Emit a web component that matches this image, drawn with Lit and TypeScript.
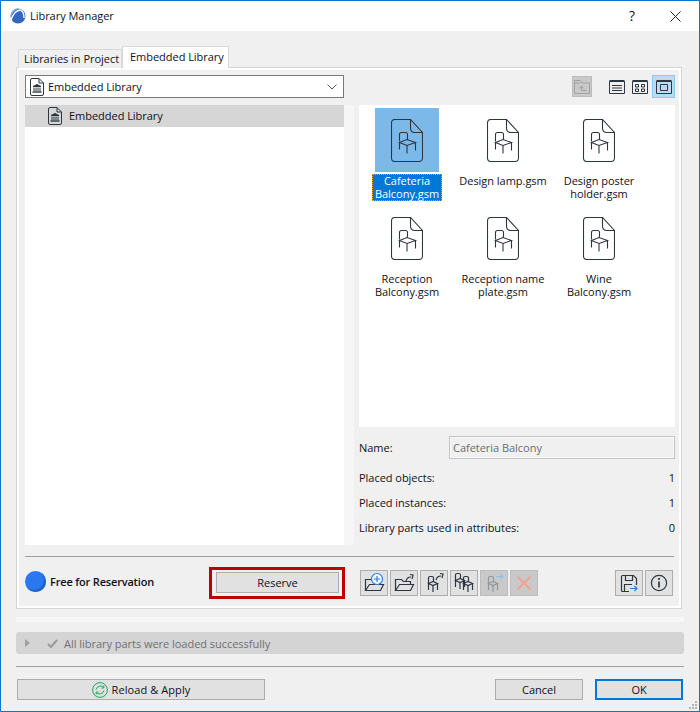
import { LitElement, html, css, svg } from "lit";
import { customElement } from "lit/decorators.js";

const ink = "#2d3640";

const chair = (x: number, y: number, c = ink) => svg`
  <g transform="translate(${x} ${y})" fill="none" stroke=${c} stroke-width="1.1">
    <path d="M.5 9.5V2.5Q.5.5 2.5.5H6.5Q8.5.5 8.5 2.5V7.5" />
    <path d="M.5 10.5L8 7.5L16.5 10.5L8 13.5Z" />
    <path d="M.5 10.5V17.5M16.5 10.5V18.5M8 13.5V21.5" />
  </g>`;

const smallChair = (dx: number, dy: number, c = ink) => svg`
  <g transform="translate(${dx} ${dy})" fill="none" stroke=${c} stroke-width="1.2">
    <path d="M8.5 13V8Q8.5 6.5 10 6.5H12Q13.5 6.5 13.5 8V11" />
    <path d="M8.5 13.5L13 11.5L17.5 13.5L13 15.5Z" />
    <path d="M8.5 13.5V20M17.5 13.5V20M13 15.5V22" />
  </g>`;

const fileChair = html`<svg width="32" height="43" viewBox="0 0 32 43" fill="none" stroke=${ink} stroke-width="1.1">
  <path d="M4 .5H19.5L31.5 13.5V39Q31.5 42.5 28 42.5H4Q.5 42.5 .5 39V4Q.5 .5 4 .5Z" />
  <path d="M19.5 .5V9Q19.5 13.5 24 13.5H31.5" />
  ${chair(8, 13)}
</svg>`;

const libDoc = html`<svg width="14" height="18" viewBox="0 0 14 18" fill="none" stroke=${ink} stroke-width="1">
  <path d="M2 .5H9L13.5 5V16Q13.5 17.5 12 17.5H2Q.5 17.5 .5 16V2Q.5 .5 2 .5Z" />
  <path d="M9 .5V5H13.5" />
  <path d="M7 6.5L11 8.5H3Z" fill=${ink} />
  <path d="M4 9.5V13M6 9.5V13M8 9.5V13M10 9.5V13" />
  <path d="M2.5 14H11.5" stroke-width="1.4" />
</svg>`;

const folder = svg`<g fill="none" stroke-width="1.2"><path d="M5.5 20.5V9.5H11.5L13.5 11.5H20.5V14" /><path d="M5.5 20.5L9.5 14.5H23.5L20.5 20.5Z" /></g>`;
const upArrow = (dx: number, dy: number) => svg`<g transform="translate(${dx} ${dy})" fill="none" stroke-width="1.2"><path d="M16 10Q17 6 21 6" /><path d="M20 3.5L23 4L22 8" /></g>`;

const glyphs: Record<string, unknown> = {
  add: html`<svg width="28" height="26" viewBox="0 0 28 26" stroke=${ink}>${folder}
    <circle cx="17" cy="9" r="5.5" fill="#f4f8ff" stroke="#2a7de1" stroke-width="1.2" /><path d="M14 9H20M17 6V12" stroke="#2a7de1" fill="none" stroke-width="1.2" /></svg>`,
  up: html`<svg width="28" height="26" viewBox="0 0 28 26" stroke=${ink}>${folder}${upArrow(0, 1)}</svg>`,
  chairUp: html`<svg width="28" height="26" viewBox="0 0 28 26" stroke=${ink}>${smallChair(0, 0)}${upArrow(0, 0)}</svg>`,
  chairs: html`<svg width="28" height="26" viewBox="0 0 28 26" stroke=${ink}>${smallChair(-3, -3)}${smallChair(5, 0)}</svg>`,
  chairOut: html`<svg width="28" height="26" viewBox="0 0 28 26">${smallChair(0, 0, "#92979b")}<path d="M16 6.5H23M20.5 4L23 6.5L20.5 9" fill="none" stroke="#8fbdf0" stroke-width="1.2" /></svg>`,
  remove: html`<svg width="28" height="26" viewBox="0 0 28 26" fill="none" stroke="#eda595" stroke-width="2.2"><path d="M7.5 6.5L20.5 19.5M20.5 6.5L7.5 19.5" /></svg>`,
  save: html`<svg width="28" height="26" viewBox="0 0 28 26" fill="none" stroke=${ink} stroke-width="1.2">
    <path d="M14 21.5H7.5Q6.5 21.5 6.5 20.5V6.5Q6.5 5.5 7.5 5.5H18.5L21.5 8.5V15" />
    <path d="M10.5 5.5V10.5H17.5V5.5M9.5 21.5V14.5H17" />
    <path d="M15 18.5H22M19.5 16L22 18.5L19.5 21" stroke="#2a7de1" /></svg>`,
  info: html`<svg width="28" height="26" viewBox="0 0 28 26" fill="none" stroke=${ink} stroke-width="1.2">
    <circle cx="14" cy="13" r="7.6" /><path d="M14 11.5V17.5" stroke-width="1.7" /><path d="M14 8V9.8" stroke-width="1.9" /></svg>`,
};

const tools = [
  { g: "add", off: false }, { g: "up", off: false }, { g: "chairUp", off: false },
  { g: "chairs", off: false }, { g: "chairOut", off: true }, { g: "remove", off: true },
];

const items = [
  { name: "Cafeteria\nBalcony.gsm", sel: true },
  { name: "Design lamp.gsm" },
  { name: "Design poster\nholder.gsm" },
  { name: "Reception\nBalcony.gsm" },
  { name: "Reception name\nplate.gsm" },
  { name: "Wine\nBalcony.gsm" },
];

@customElement("app-root")
export class AppRoot extends LitElement {
  static styles = css`
    :host { display: block; width: 700px; height: 712px; font: 11px/15px "Open Sans", "Liberation Sans", sans-serif; letter-spacing: -0.03px; color: #10101c; }
    * { box-sizing: border-box; }
    .window { position: relative; width: 700px; height: 712px; border: 1px solid #0a78d0; background: #f0f0f0; display: flex; flex-direction: column; }
    .title { height: 30px; background: #fff; display: flex; align-items: center; padding: 0 18px 0 9px; flex: none; }
    .title .name { margin-left: 4px; flex: 1; margin-top: -2px; }
    .help { margin-right: 35px; font-size: 14px; margin-top: -2px; }
    .content { padding: 15px 15px 0; display: flex; flex-direction: column; flex: 1; }
    .tabs { display: flex; align-items: flex-end; padding-left: 2px; height: 22px; margin-bottom: -1px; position: relative; z-index: 1; }
    .tab { height: 19px; padding: 1px 0 0 5px; width: 104px; background: #f0f0f0; border: 1px solid #d9d9d9; border-bottom: none; white-space: nowrap; }
    .tab.on { height: 22px; width: 107px; background: #fff; padding: 2px 0 0 7px; border-color: #d9d9d9; }
    .panel { width: 666px; height: 542px; flex: none; border: 1px solid #d4d4d4; box-shadow: inset 0 0 0 2px #fff; padding: 7px 7px 0 8px; }
    .cols { display: grid; grid-template-columns: 319px 316px; column-gap: 15px; }
    .select { height: 23px; background: #fff; border: 1px solid #7a7a7a; display: flex; align-items: center; padding: 0 6px 0 4px; gap: 4px; }
    .select span { flex: 1; }
    .views { display: flex; align-items: center; }
    .vbtn { width: 23px; height: 23px; display: flex; align-items: center; justify-content: center; }
    .vbtn.plain svg { margin-right: 1px; }
    .vbtn.sel { background: #b8dcf8; border: 1px solid #90c8f0; }
    .vbtn.folder { width: 20px; height: 21px; background: #c9c9c9; border: 1px solid #bcbcbc; margin: 0 auto 0 213px; }
    .main { margin-top: 7px; height: 440px; position: relative; }
    .tree { background: #fff; }
    .row { height: 22px; background: #d6d6d6; display: flex; align-items: center; padding-left: 23px; gap: 7px; }
    .row span { margin-top: -2px; }
    .split { position: absolute; left: 319px; top: 0; width: 10px; height: 440px; background: #f6f6f6; }
    .right { display: flex; flex-direction: column; }
    .grid { height: 322px; background: #fff; padding-top: 3px; display: grid; grid-template-columns: repeat(3, 96px); grid-auto-rows: 98px; }
    .cell { display: flex; flex-direction: column; align-items: center; }
    .thumb { width: 64px; height: 64px; flex: none; display: flex; align-items: center; justify-content: center; }
    .cell.sel .thumb { background: #7cb9e8; }
    .label { margin-top: 2px; height: 27px; text-align: center; line-height: 13px; white-space: pre; padding: 0 2px; border: 1px solid transparent; }
    .label span { display: block; margin-top: -1px; }
    .cell.sel .label { background: #0078d7; color: #fff; border: 1px dotted #e8a030; }
    .nameRow { margin-top: 9px; height: 23px; display: grid; grid-template-columns: 90px 226px; align-items: center; }
    .input { height: 23px; border: 1px solid #c4c4c4; box-shadow: inset 0 0 0 1px #f8f8f8; color: #6d6d6d; padding: 0 3px; display: flex; align-items: center; }
    .stat { height: 25px; display: flex; justify-content: space-between; align-items: center; }
    .stat.first { margin-top: 6px; }
    .line { height: 1px; background: #a0a0a0; flex: none; }
    .sep { margin-top: 11px; }
    .bottom { margin-top: 10px; height: 32px; display: flex; align-items: center; }
    .status { width: 184px; display: flex; align-items: center; gap: 4px; font-weight: 600; letter-spacing: -0.18px; margin-top: -3px; flex: none; }
    .dot { width: 21px; height: 21px; border-radius: 50%; background: #2a78f0; box-shadow: inset -2px -2px 0 #1f62c8; flex: none; }
    .red { width: 136px; height: 32px; border: 3px solid #c00000; padding: 2px 3px 3px 4px; flex: none; margin-right: 15px; }
    .btn { background: #e1e1e1; border: 1px solid #adadad; display: flex; align-items: center; justify-content: center; height: 100%; gap: 4px; }
    .tools { display: flex; gap: 2px; }
    .tool { width: 28px; height: 26px; background: #e1e1e1; border: 1px solid #adadad; display: flex; align-items: center; justify-content: center; padding: 0; }
    .tool svg { margin: -1px; flex: none; }
    .tool.off { background: #c9c9c9; border-color: #bcbcbc; }
    .tools.end { margin-left: auto; margin-right: 1px; }
    .stripe { margin-top: 8px; height: 5px; background: #f7f7f7; flex: none; }
    .msg { margin-top: 10px; height: 22px; border-radius: 3px; background: #d4d4d4; color: #6f6f78; display: flex; align-items: center; padding-left: 9px; flex: none; }
    .msg svg { flex: none; }
    .msg .tri { margin-right: 17px; }
    .msg .chk { margin-right: 6px; }
    .rule { margin-top: 12px; }
    .footer { margin-top: 12px; height: 21px; display: flex; padding: 0 1px; }
    .footer .btn { height: 21px; }
    .reload { width: 248px; letter-spacing: 0.08px; }
    .cancel { width: 88px; margin-left: auto; margin-right: 12px; }
    .ok { width: 88px; border: 2px solid #0078d7; }
    .grip { position: absolute; right: 1px; bottom: 1px; }
  `;

  render() {
    return html`<div class="window">
      <div class="title">
        <svg width="16" height="16" viewBox="0 0 16 16"><circle cx="8" cy="8" r="7.5" fill="#3468c0" /><path d="M1 12Q4 3 10 2Q14 3 14 10" fill="none" stroke="#fff" stroke-width="1.3" /><path d="M1 5Q3 1 8 1Q3 3 1 8Z" fill="#8fb4ea" /></svg>
        <span class="name">Library Manager</span>
        <span class="help">?</span>
        <svg width="11" height="11" viewBox="0 0 11 11" fill="none" stroke="#222"><path d="M.5 .5L10.5 10.5M10.5 .5L.5 10.5" /></svg>
      </div>
      <div class="content">
        <div class="tabs"><div class="tab">Libraries in Project</div><div class="tab on">Embedded Library</div></div>
        <div class="panel">
          <div class="cols">
            <div class="select">${libDoc}<span>Embedded Library</span>
              <svg width="10" height="6" viewBox="0 0 10 6" fill="none" stroke="#555"><path d="M.5 .5L5 5L9.5 .5" /></svg></div>
            <div class="views">
              <div class="vbtn folder"><svg width="16" height="14" viewBox="0 0 16 14" fill="none" stroke="#a2a2a2"><path d="M.5 13.5V.5H6L8 3H15.5V13.5Z" /><path d="M.5 3H6M5 8.5L7.5 6L10 8.5M7.5 6V10.5H12.5" /></svg></div>
              <div class="vbtn plain"><svg width="16" height="14" viewBox="0 0 16 14" fill="none" stroke=${ink}><path d="M.5 1.5H15.5V13.5H.5Z" /><path d="M.5 1H15.5" stroke-width="2" /><path d="M3 5.5H13M3 8H13M3 10.5H13" /></svg></div>
              <div class="vbtn plain"><svg width="16" height="14" viewBox="0 0 16 14" fill="none" stroke=${ink}><path d="M.5 1.5H15.5V13.5H.5Z" /><path d="M.5 1H15.5" stroke-width="2" /><path d="M3.5 4.5H6.5V7H3.5ZM9.5 4.5H12.5V7H9.5ZM3.5 9H6.5V11.5H3.5ZM9.5 9H12.5V11.5H9.5Z" /></svg></div>
              <div class="vbtn sel"><svg width="16" height="14" viewBox="0 0 16 14" fill="none" stroke=${ink}><path d="M.5 1.5H15.5V13.5H.5Z" /><path d="M.5 1H15.5" stroke-width="2" /><path d="M4.5 4.5H11.5V10.5H4.5Z" /></svg></div>
            </div>
          </div>
          <div class="cols main">
            <div class="tree"><div class="row">${libDoc}<span>Embedded Library</span></div></div>
            <div class="split"></div>
            <div class="right">
              <div class="grid">
                ${items.map((i) => html`<div class="cell ${i.sel ? "sel" : ""}"><div class="thumb">${fileChair}</div><div class="label"><span>${i.name}</span></div></div>`)}
              </div>
              <div class="nameRow"><span>Name:</span><div class="input">Cafeteria Balcony</div></div>
              <div class="stat first"><span>Placed objects:</span><span>1</span></div>
              <div class="stat"><span>Placed instances:</span><span>1</span></div>
              <div class="stat"><span>Library parts used in attributes:</span><span>0</span></div>
            </div>
          </div>
          <div class="line sep"></div>
          <div class="bottom">
            <div class="status"><div class="dot"></div><span>Free for Reservation</span></div>
            <div class="red"><div class="btn">Reserve</div></div>
            <div class="tools">${tools.map((t) => html`<div class="tool ${t.off ? "off" : ""}">${glyphs[t.g]}</div>`)}</div>
            <div class="tools end"><div class="tool">${glyphs.save}</div><div class="tool">${glyphs.info}</div></div>
          </div>
        </div>
        <div class="stripe"></div>
        <div class="msg">
          <svg class="tri" width="5" height="8" viewBox="0 0 5 8"><path d="M0 0L5 4L0 8Z" fill="#a0a0a0" /></svg>
          <svg class="chk" width="11" height="9" viewBox="0 0 11 9" fill="none" stroke="#9a9a9a" stroke-width="2"><path d="M1 5L4 8L10 1" /></svg>
          All library parts were loaded successfully
        </div>
        <div class="line rule"></div>
        <div class="footer">
          <div class="btn reload"><svg width="16" height="16" viewBox="0 0 16 16" fill="none" stroke="#22a85a"><circle cx="8" cy="8" r="7.4" /><path d="M4 7.5Q5 4 8.5 4Q10.5 4 11.5 5.5M11.8 3.5V6H9.5M12 8.5Q11 12 7.5 12Q5.5 12 4.5 10.5M4.2 12.5V10H6.5" /></svg>Reload &amp; Apply</div>
          <div class="btn cancel">Cancel</div>
          <div class="btn ok">OK</div>
        </div>
      </div>
      <svg class="grip" width="9" height="9" viewBox="0 0 9 9" fill="#b4b4b4"><path d="M6 0h2v2H6ZM3 3h2v2H3ZM6 3h2v2H6ZM0 6h2v2H0ZM3 6h2v2H3ZM6 6h2v2H6Z" /></svg>
    </div>`;
  }
}
